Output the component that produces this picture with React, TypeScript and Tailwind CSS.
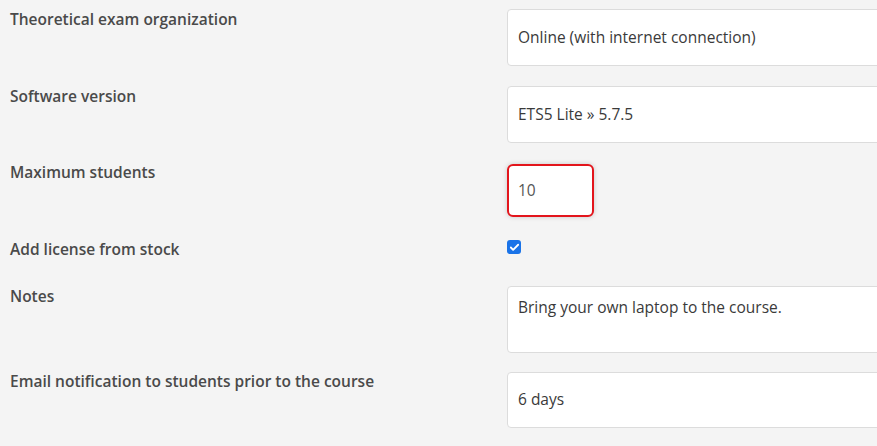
import { Check } from 'lucide-react';

interface Row {
  label: string;
  value: string;
}

const inputCls =
  'w-[420px] h-[57px] bg-white border border-[#dcdcdc] rounded-[4px] pl-[10px] pb-[2px] text-[15.5px] leading-6 text-[#3a3a3a] outline-none';

function Label({ children }: { children: React.ReactNode }) {
  return (
    <label className="w-[507px] shrink-0 pl-[10px] text-[15.5px] leading-6 font-semibold text-[#4a4a4a]">
      {children}
    </label>
  );
}

export default function App() {
  const top: Row[] = [
    { label: 'Theoretical exam organization', value: 'Online (with internet connection)' },
    { label: 'Software version', value: 'ETS5 Lite » 5.7.5' },
  ];

  return (
    <div className="w-full h-[446px] overflow-hidden bg-[#f4f4f4] pt-[7px] font-['Open_Sans',sans-serif]">
      {top.map((r, i) => (
        <div key={r.label} className={`flex items-start ${i === 0 ? 'mb-[18px]' : 'mb-[17px]'}`}>
          <Label>{r.label}</Label>
          <div className="pt-[2px]">
            <input readOnly value={r.value} className={inputCls} />
          </div>
        </div>
      ))}

      {/* max students, has error */}
      <div className="flex items-start mb-[20px]">
        <Label>Maximum students</Label>
        <div className="pt-[4px]">
          <input
            readOnly
            value="10"
            className="w-[87px] h-[53px] bg-white border-2 border-[#e3151c] rounded-[6px] pl-[9px] pb-[2px] text-[15.5px] leading-6 text-[#555] outline-none shadow-[0_0_5px_rgba(0,0,0,0.18)]"
          />
        </div>
      </div>

      <div className="flex items-start mb-[23px]">
        <Label>Add license from stock</Label>
        <div className="pt-[3px]">
          <span className="flex items-center justify-center w-[14px] h-[14px] rounded-[3px] bg-[#1a73e8]">
            <Check className="w-[11px] h-[11px] text-white" strokeWidth={4} />
          </span>
        </div>
      </div>

      <div className="flex items-start mb-[16px]">
        <Label>Notes</Label>
        <div className="pt-[2px]">
          <textarea
            readOnly
            value="Bring your own laptop to the course."
            className="block w-[420px] h-[67px] resize-none bg-white border border-[#dcdcdc] rounded-[4px] pl-[10px] pt-[8px] text-[15.5px] leading-6 text-[#3a3a3a] outline-none"
          />
        </div>
      </div>

      <div className="flex items-start">
        <Label>Email notification to students prior to the course</Label>
        <div className="pt-[3px]">
          <input readOnly value="6 days" className={`${inputCls} !h-[56px]`} />
        </div>
      </div>
    </div>
  );
}
